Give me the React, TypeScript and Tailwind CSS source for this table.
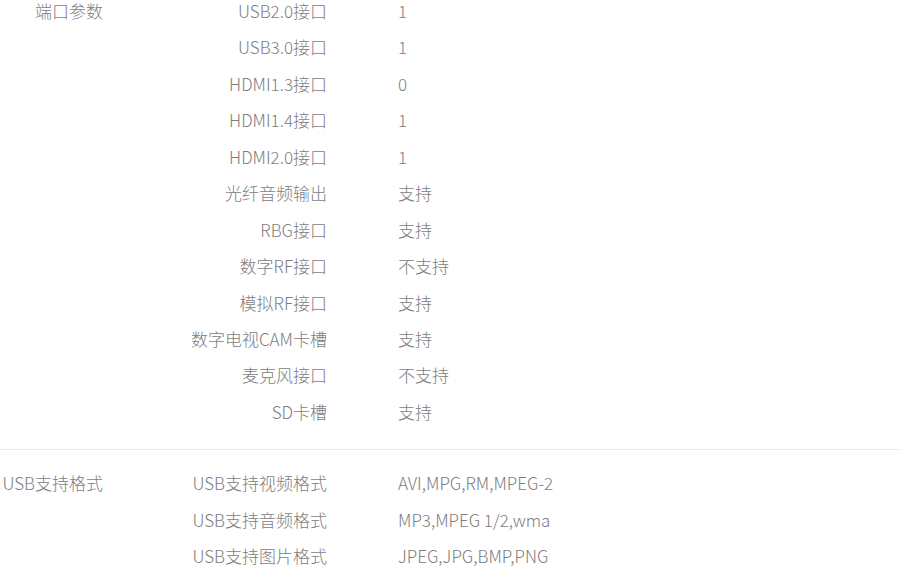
const groups = [
  {
    title: "端口参数",
    rows: [
      ["USB2.0接口", "1"],
      ["USB3.0接口", "1"],
      ["HDMI1.3接口", "0"],
      ["HDMI1.4接口", "1"],
      ["HDMI2.0接口", "1"],
      ["光纤音频输出", "支持"],
      ["RBG接口", "支持"],
      ["数字RF接口", "不支持"],
      ["模拟RF接口", "支持"],
      ["数字电视CAM卡槽", "支持"],
      ["麦克风接口", "不支持"],
      ["SD卡槽", "支持"],
    ],
  },
  {
    title: "USB支持格式",
    rows: [
      ["USB支持视频格式", "AVI,MPG,RM,MPEG-2"],
      ["USB支持音频格式", "MP3,MPEG 1/2,wma"],
      ["USB支持图片格式", "JPEG,JPG,BMP,PNG"],
    ],
  },
];

export default function App() {
  return (
    <main
      className="h-[572px] w-[900px] overflow-hidden bg-white text-[17px] leading-[18px] font-light text-[#7d7d7d]"
      style={{ fontFamily: '"Noto Sans CJK SC", "Noto Sans", sans-serif' }}
    >
      {groups.map((g, i) => (
        <section
          key={g.title}
          className={
            i === 0
              ? "flex border-b border-[#ececec] pt-[2px] pb-[28.6px]"
              : "flex pt-[23.8px] pb-[18px]"
          }
        >
          {/* group name */}
          <div className="h-[18px] w-[103px] shrink-0 text-right whitespace-nowrap">
            {g.title}
          </div>
          <div className="flex flex-1 flex-col gap-[18.45px]">
            {g.rows.map(([k, v]) => (
              <div key={k} className="flex h-[18px]">
                <div className="w-[224px] shrink-0 text-right whitespace-nowrap">
                  {k}
                </div>
                <div className="pl-[71px] whitespace-nowrap">{v}</div>
              </div>
            ))}
          </div>
        </section>
      ))}
    </main>
  );
}
